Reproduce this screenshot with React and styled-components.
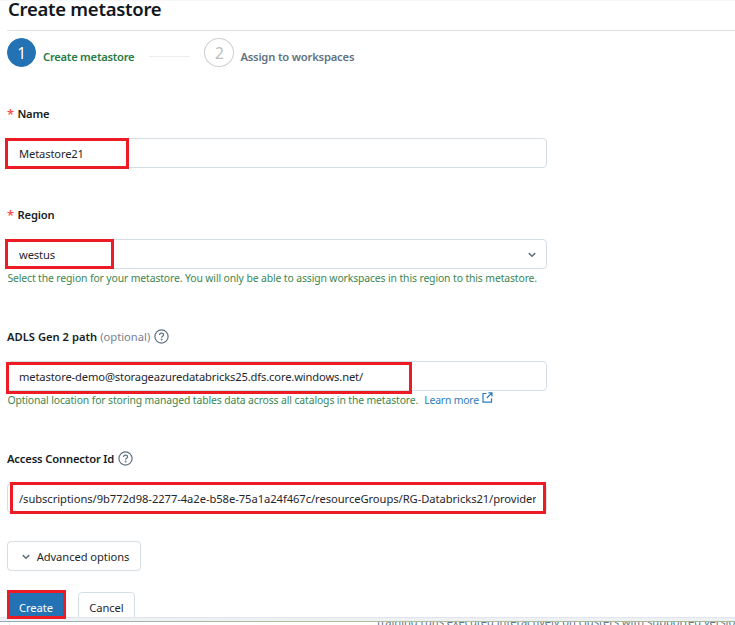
import React from "react";
import styled, { createGlobalStyle } from "styled-components";

const Global = createGlobalStyle`
  *, *::before, *::after { box-sizing: border-box; }
  body { margin: 0; background: #fff; }
`;

const Page = styled.main`
  width: 735px;
  height: 625px;
  overflow: hidden;
  border-top: 1px solid #f5f6f7;
  display: flex;
  flex-direction: column;
  font-family: "Noto Sans", "Open Sans", sans-serif;
  font-size: 11.2px;
  letter-spacing: -0.15px;
  color: #1f272d;
  white-space: nowrap;
`;

const Dialog = styled.section`
  height: 616px;
  flex: none;
  padding-left: 7px;
`;

const Title = styled.h1`
  margin: 0;
  height: 30px;
  padding-left: 1px;
  border-bottom: 1px solid #dfe4ec;
  font-size: 18.5px;
  font-weight: 600;
  line-height: 15px;
  letter-spacing: -0.27px;
  color: #11171c;
`;

const Steps = styled.ol`
  list-style: none;
  margin: 0;
  padding: 7px 0 0;
  height: 74px;
  display: flex;
  align-items: flex-start;
`;

const Step = styled.li`
  display: flex;
  align-items: center;
`;

const StepNumber = styled.span`
  width: ${(p) => (p.$active ? 29 : 30)}px;
  height: 29px;
  border-radius: 50%;
  border: 1px solid ${(p) => (p.$active ? "#2272b4" : "#cfcfcf")};
  background: ${(p) => (p.$active ? "#2272b4" : "#fff")};
  color: ${(p) => (p.$active ? "#fff" : "#bdbdbd")};
  display: flex;
  align-items: center;
  justify-content: center;
  font-size: 15.5px;
  line-height: 1;
  padding-top: 2px;
`;

const StepLabel = styled.span`
  padding: 7px 0 0 ${(p) => (p.$active ? 7 : 6)}px;
  line-height: 15px;
  font-weight: 600;
  letter-spacing: ${(p) => (p.$active ? "-0.25px" : "-0.18px")};
  color: ${(p) => (p.$active ? "#277c43" : "#5f7281")};
`;

const StepLine = styled.span`
  width: 41px;
  height: 1px;
  margin: 18px 14px 0 15px;
  background: #ececec;
`;

const Field = styled.div`
  height: ${(p) => p.$height}px;
`;

const Label = styled.label`
  display: flex;
  align-items: center;
  height: 16px;
  margin-bottom: 17px;
  font-weight: 600;
  letter-spacing: ${(p) => p.$tracking || "-0.15px"};
  color: #161d22;
`;

const Required = styled.span`
  width: 10.5px;
  padding-top: 2px;
  font-size: 13px;
  color: #ff4d4f;
`;

const Optional = styled.span`
  margin-left: 3px;
  font-weight: 400;
  letter-spacing: 0;
  color: #74828e;
`;

const Control = styled.div`
  position: relative;
  width: 540px;
  height: 30px;
  padding: 1px 10px 0 11px;
  border: 1px solid #d5dee5;
  border-radius: 4px;
  display: flex;
  align-items: center;
  justify-content: space-between;
`;

const Value = styled.span`
  flex: 1;
  min-width: 0;
  overflow: hidden;
  letter-spacing: ${(p) => p.$tracking || "-0.15px"};
`;

const Highlight = styled.span`
  position: absolute;
  left: ${(p) => p.$left}px;
  top: ${(p) => p.$top}px;
  width: ${(p) => p.$width}px;
  height: ${(p) => p.$height}px;
  border: 3px solid #ed1c24;
  pointer-events: none;
`;

const Hint = styled.p`
  margin: 1px 0 0;
  padding-left: 0.4px;
  display: flex;
  font-size: 10.4px;
  line-height: 17px;
  letter-spacing: -0.12px;
  color: #3b8650;
`;

const Link = styled.a`
  display: flex;
  margin-left: 6px;
  color: #2e7bb9;
  letter-spacing: -0.18px;
`;

const Button = styled.button`
  width: ${(p) => p.$width}px;
  height: 30px;
  padding: 1px 0 0;
  display: flex;
  align-items: center;
  justify-content: center;
  gap: 7px;
  border: 1px solid ${(p) => (p.$primary ? "#2272b4" : "#d5dee5")};
  border-radius: 4px;
  background: ${(p) => (p.$primary ? "#2272b4" : "#fff")};
  color: ${(p) => (p.$primary ? "#fff" : "#1f272d")};
  font: inherit;
  letter-spacing: -0.08px;
`;

const AdvancedButton = styled(Button)`
  padding-left: 3px;
`;

const Actions = styled.div`
  display: flex;
  gap: 13px;
  margin-top: 21px;
`;

const Action = styled.div`
  position: relative;
`;

const ActionClip = styled.div`
  height: 25px;
  overflow: hidden;
`;

const Backdrop = styled.footer`
  flex: none;
  height: 8px;
  border-top: 1px solid #dfe5ea;
  background: #fff;
  overflow: hidden;
`;

const BackdropEdge = styled.div`
  height: 4px;
  border-bottom: 1px solid;
  border-image: linear-gradient(90deg, #9aaab6, #b3bd9c 40%, #a9b793) 1;
  background: #eef2f5;
`;

const BackdropPane = styled.div`
  height: 4px;
  margin-left: 9px;
  padding-left: 367px;
  border-left: 1px solid #e8ecef;
  overflow: hidden;
`;

const BackdropText = styled.p`
  margin: -8px 0 0;
  line-height: 16px;
  letter-spacing: -0.07px;
  color: #64788a;
`;

const HelpIcon = styled.svg`
  margin-left: 4px;
  flex: none;
`;

const Help = () => (
  <HelpIcon width="15" height="15" viewBox="0 0 15 15" fill="none" stroke="#5f7281" strokeWidth="1.2">
    <circle cx="7.5" cy="7.5" r="6.6" />
    <path d="M5.5 6.1c0-1.2.9-1.9 2-1.9s2 .7 2 1.7c0 1.4-1.9 1.4-1.9 2.9" />
    <circle cx="7.6" cy="10.5" r=".35" />
  </HelpIcon>
);

const Chevron = () => (
  <svg width="8" height="6" viewBox="0 0 8 6" fill="none" stroke="#5f7281" strokeWidth="1.5">
    <path d="M.8 1.1 4 4.3l3.2-3.2" />
  </svg>
);

const ExternalIcon = styled.svg`
  margin: 0 0 0 3px;
`;

const External = () => (
  <ExternalIcon width="11" height="11" viewBox="0 0 11 11" fill="none" stroke="#2e7bb9" strokeWidth="1.2">
    <path d="M4.5 1.5H1v8.7h8.5V6.3M6.4.8H10v3.7M10 .8 4.8 6" />
  </ExternalIcon>
);

export default function App() {
  return (
    <>
      <Global />
      <Page>
        <Dialog>
          <Title>Create metastore</Title>
          <Steps>
            <Step>
              <StepNumber $active>1</StepNumber>
              <StepLabel $active>Create metastore</StepLabel>
            </Step>
            <StepLine />
            <Step>
              <StepNumber>2</StepNumber>
              <StepLabel>Assign to workspaces</StepLabel>
            </Step>
          </Steps>

          <Field $height={101}>
            <Label $tracking="-0.25px">
              <Required>*</Required>Name
            </Label>
            <Control>
              <Value>Metastore21</Value>
              <Highlight $left={-3} $top={-1} $width={124} $height={31} />
            </Control>
          </Field>

          <Field $height={122}>
            <Label>
              <Required>*</Required>Region
            </Label>
            <Control>
              <Value>westus</Value>
              <Chevron />
              <Highlight $left={-3} $top={-1} $width={109} $height={30} />
            </Control>
            <Hint>
              Select the region for your metastore. You will only be able to assign workspaces in this region to this metastore.
            </Hint>
          </Field>

          <Field $height={122}>
            <Label $tracking="0">
              ADLS Gen 2 path <Optional>(optional)</Optional>
              <Help />
            </Label>
            <Control>
              <Value>metastore-demo@storageazuredatabricks25.dfs.core.windows.net/</Value>
              <Highlight $left={-2} $top={0} $width={406} $height={32} />
            </Control>
            <Hint>
              Optional location for storing managed tables data across all catalogs in the metastore.
              <Link>
                Learn more
                <External />
              </Link>
            </Hint>
          </Field>

          <Field $height={91}>
            <Label>
              Access Connector Id
              <Help />
            </Label>
            <Control>
              <Value $tracking="-0.06px">
                /subscriptions/9b772d98-2277-4a2e-b58e-75a1a24f467c/resourceGroups/RG-Databricks21/providers
              </Value>
              <Highlight $left={2} $top={-2} $width={536} $height={32} />
            </Control>
          </Field>

          <AdvancedButton $width={134}>
            <Chevron />
            Advanced options
          </AdvancedButton>
          <Actions>
            <Action>
              <ActionClip>
                <Button $primary $width={58}>Create</Button>
              </ActionClip>
              <Highlight $left={0} $top={-2} $width={59} $height={29} />
            </Action>
            <Action>
              <ActionClip>
                <Button $width={57}>Cancel</Button>
              </ActionClip>
            </Action>
          </Actions>
        </Dialog>
        <Backdrop>
          <BackdropEdge />
          <BackdropPane>
            <BackdropText>training runs executed interactively on clusters with supported versions</BackdropText>
          </BackdropPane>
        </Backdrop>
      </Page>
    </>
  );
}
